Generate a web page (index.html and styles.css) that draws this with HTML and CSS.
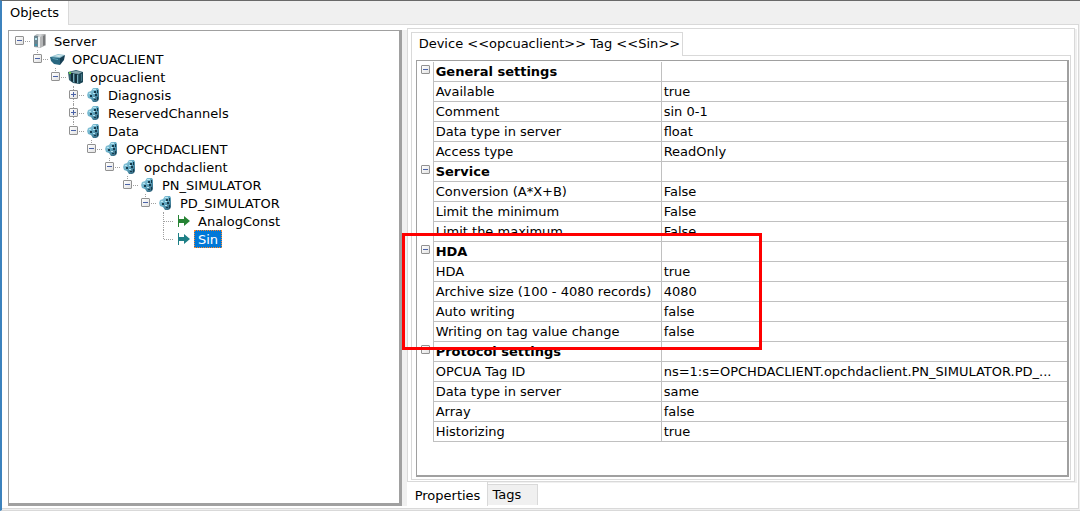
FILE: index.html
```html
<!DOCTYPE html>
<html lang="en">
<head>
<meta charset="utf-8">
<title>Objects</title>
<link rel="stylesheet" href="styles.css">
</head>
<body>
<svg class="defs" aria-hidden="true">
  <defs>
    <linearGradient id="ball" x1="0" y1="0" x2="1" y2="1">
      <stop offset="0" stop-color="#a5d8e8"/><stop offset=".5" stop-color="#62a9c3"/><stop offset="1" stop-color="#24536b"/>
    </linearGradient>
    <linearGradient id="steel" x1="0" y1="0" x2="1" y2="0">
      <stop offset="0" stop-color="#8f999e"/><stop offset=".5" stop-color="#d9dcdd"/><stop offset="1" stop-color="#9a9a9a"/>
    </linearGradient>
    <symbol id="server" viewBox="0 0 16 16">
      <path d="M2 3 5 1h8l1 1v10l-6 3-6-1z" fill="url(#steel)"/>
      <path d="m8 4 5-2.5 1 .5v10l-6 3z" fill="#b5b6b7"/>
      <path d="m11 3 2-1v10l-2 1z" fill="#77797b"/>
      <path d="M2 3h4v11l-4-1z" fill="#6d858f"/>
      <path d="M3 5h2v2H3z" fill="#b9e4ee"/>
      <path d="M3 11h2v2H3z" fill="#3b94ad"/>
      <path d="M6 4h2v10H6z" fill="#edf1f2"/>
    </symbol>
    <symbol id="device" viewBox="0 0 16 16">
      <path d="m0 6 8-3 7 1-5 4-9-1z" fill="#8fc0cf"/>
      <path d="m4 5 4-1 5 .5L9 6z" fill="#d4e9ed"/>
      <path d="m0 6 10 1v7l-6-1-3-3z" fill="#286780"/>
      <path d="m10 7 5-3-1 5-4 5z" fill="#163f54"/>
      <path d="m2 7 6 1v1L3 8z" fill="#5ea5ba"/>
    </symbol>
    <symbol id="rack" viewBox="0 0 16 16">
      <path d="m0 3 8-2 7 2v10l-4 2-6-1-4-3z" fill="#34606f"/>
      <path d="m2 3 6-1 6 1-3 2-7-1z" fill="#8ba9b1"/>
      <path d="M3 4h2v9l-2-1zM7 5h2v9H7z" fill="#142f3b"/>
      <path d="M5 5h1v8H5zM9 6h1v8H9z" fill="#76abbb"/>
      <path d="m11 5 4-2v10l-4 2z" fill="#1d4655"/>
      <path d="M13 5h1v7h-1z" fill="#477888"/>
      <path d="M1 3h2v2H1z" fill="#66c744"/>
    </symbol>
    <symbol id="node" viewBox="0 0 16 16">
      <path d="M7 1h5l1 2v9l-1 2-2 1H7l-2-3-3-1-1-3 1-3 3-1z" fill="url(#ball)"/>
      <path d="M8 4h2v2H8zM4 8h2v2H4zM11 3h1v3h-1zM9 7h2v2H9zM8 12h2v1H8zM11 10h1v3h-1z" fill="#173b4c"/>
      <path d="M7 2h3v1H7zM3 6h2v1H3zM7 6h2v1H7zM7 10h2v1H7z" fill="#bce6f0"/>
    </symbol>
    <symbol id="arrow" viewBox="0 0 16 16">
      <path d="M2 2h1v12H2zM3 6h5V3l6 5-6 5v-3H3z" fill="currentColor"/>
    </symbol>
  </defs>
</svg>

<main class="window">
  <div class="tabs" role="tablist">
    <button class="tab-main" role="tab" aria-selected="true">Objects</button>
  </div>
  <div class="page">
    <nav class="tree" aria-label="Objects">
      <ul class="root">
        <li>
          <div class="node"><button class="toggle" aria-label="Collapse Server"></button><svg class="icon"><use href="#server"/></svg><span class="label">Server</span></div>
          <ul><li>
            <div class="node"><button class="toggle" aria-label="Collapse OPCUACLIENT"></button><svg class="icon"><use href="#device"/></svg><span class="label">OPCUACLIENT</span></div>
            <ul><li>
              <div class="node"><button class="toggle" aria-label="Collapse opcuaclient"></button><svg class="icon"><use href="#rack"/></svg><span class="label">opcuaclient</span></div>
              <ul>
                <li><div class="node"><button class="toggle plus" aria-label="Expand Diagnosis"></button><svg class="icon"><use href="#node"/></svg><span class="label">Diagnosis</span></div></li>
                <li><div class="node"><button class="toggle plus" aria-label="Expand ReservedChannels"></button><svg class="icon"><use href="#node"/></svg><span class="label">ReservedChannels</span></div></li>
                <li>
                  <div class="node"><button class="toggle" aria-label="Collapse Data"></button><svg class="icon"><use href="#node"/></svg><span class="label">Data</span></div>
                  <ul><li>
                    <div class="node"><button class="toggle" aria-label="Collapse OPCHDACLIENT"></button><svg class="icon"><use href="#node"/></svg><span class="label">OPCHDACLIENT</span></div>
                    <ul><li>
                      <div class="node"><button class="toggle" aria-label="Collapse opchdaclient"></button><svg class="icon"><use href="#node"/></svg><span class="label">opchdaclient</span></div>
                      <ul><li>
                        <div class="node"><button class="toggle" aria-label="Collapse PN_SIMULATOR"></button><svg class="icon"><use href="#node"/></svg><span class="label">PN_SIMULATOR</span></div>
                        <ul><li>
                          <div class="node"><button class="toggle" aria-label="Collapse PD_SIMULATOR"></button><svg class="icon"><use href="#node"/></svg><span class="label">PD_SIMULATOR</span></div>
                          <ul>
                            <li><div class="node leaf"><svg class="icon green"><use href="#arrow"/></svg><span class="label">AnalogConst</span></div></li>
                            <li><div class="node leaf"><svg class="icon teal"><use href="#arrow"/></svg><span class="label selected">Sin</span></div></li>
                          </ul>
                        </li></ul>
                      </li></ul>
                    </li></ul>
                  </li></ul>
                </li>
              </ul>
            </li></ul>
          </li></ul>
        </li>
      </ul>
    </nav>

    <section class="side">
      <div class="outer">
        <div class="tabs" role="tablist">
          <button class="tab-device" role="tab" aria-selected="true">Device &lt;&lt;opcuaclient&gt;&gt; Tag &lt;&lt;Sin&gt;&gt;</button>
        </div>
        <div class="inner">
          <div class="grid">
            <table>
              <colgroup><col class="c-toggle"><col class="c-name"><col></colgroup>
              <tbody>
                <tr><td><button class="toggle" aria-label="Collapse General settings"></button></td><th scope="rowgroup">General settings</th><td></td></tr>
                <tr><td></td><td>Available</td><td>true</td></tr>
                <tr><td></td><td>Comment</td><td>sin 0-1</td></tr>
                <tr><td></td><td>Data type in server</td><td>float</td></tr>
                <tr><td></td><td>Access type</td><td>ReadOnly</td></tr>
              </tbody>
              <tbody>
                <tr><td><button class="toggle" aria-label="Collapse Service"></button></td><th scope="rowgroup">Service</th><td></td></tr>
                <tr><td></td><td>Conversion (A*X+B)</td><td>False</td></tr>
                <tr><td></td><td>Limit the minimum</td><td>False</td></tr>
                <tr><td></td><td>Limit the maximum</td><td>False</td></tr>
              </tbody>
              <tbody>
                <tr><td><button class="toggle" aria-label="Collapse HDA"></button></td><th scope="rowgroup">HDA</th><td></td></tr>
                <tr><td></td><td>HDA</td><td>true</td></tr>
                <tr><td></td><td>Archive size (100 - 4080 records)</td><td>4080</td></tr>
                <tr><td></td><td>Auto writing</td><td>false</td></tr>
                <tr><td></td><td>Writing on tag value change</td><td>false</td></tr>
              </tbody>
              <tbody>
                <tr><td><button class="toggle" aria-label="Collapse Protocol settings"></button></td><th scope="rowgroup">Protocol settings</th><td></td></tr>
                <tr><td></td><td>OPCUA Tag ID</td><td>ns=1:s=OPCHDACLIENT.opchdaclient.PN_SIMULATOR.PD_...</td></tr>
                <tr><td></td><td>Data type in server</td><td>same</td></tr>
                <tr><td></td><td>Array</td><td>false</td></tr>
                <tr><td></td><td>Historizing</td><td>true</td></tr>
              </tbody>
            </table>
            <div class="highlight"></div>
          </div>
        </div>
      </div>
      <div class="tabs" role="tablist">
        <button class="tab-bottom active" role="tab" aria-selected="true">Properties</button>
        <button class="tab-bottom" role="tab" aria-selected="false">Tags</button>
      </div>
    </section>
  </div>
</main>
</body>
</html>
```
FILE: styles.css
```css
* { box-sizing: border-box; }

body {
  margin: 0;
  background: #f0f0f0;
  color: #000;
  font: 13px/18px Verdana, "DejaVu Sans", sans-serif;
}

button {
  margin: 0;
  padding: 0;
  border: 0;
  border-radius: 0;
  background: #fff;
  color: inherit;
  font: inherit;
}

ul { list-style: none; margin: 0; padding: 0; }

.defs { position: absolute; width: 0; height: 0; }

.window {
  display: flex;
  flex-direction: column;
  min-height: 100vh;
  padding: 0 1px 1px 0;
  border-top: 1px solid #696969;
  border-left: 2px solid #3c82bd;
  border-bottom: 1px solid #d9d9d9;
}

.tabs { display: flex; }

.tab-main {
  height: 24px;
  padding: 0 9px 0 8px;
  border-right: 1px solid #d9d9d9;
}

.window > .tabs::after,
.outer > .tabs::after {
  content: "";
  flex: 1;
  border-bottom: 1px solid #d9d9d9;
}

.window > .tabs::after { background: #f0f0f0; }

.page {
  flex: 1;
  display: grid;
  grid-template-columns: 37fr 63fr;
  padding: 3px 1px 2px 6px;
  gap: 5px;
  background: #fff;
  border-right: 1px solid #d9d9d9;
  border-bottom: 1px solid #d9d9d9;
}

.tree {
  margin-top: 2px;
  padding: 1px 0 0 6px;
  border: solid #a0a0a0;
  border-width: 1px 3px 3px 1px;
  box-shadow: 5px 0 #f0f0f0;
}

.tree li { position: relative; }
.tree li li { margin-left: 18px; }

.tree li li::before {
  content: "";
  position: absolute;
  left: 4px;
  top: 0;
  height: 100%;
  border-left: 1px dotted #a0a0a0;
}

.tree li li:last-child::before { height: 9px; }

.node {
  position: relative;
  display: flex;
  align-items: center;
  height: 18px;
}

.node .toggle { margin-bottom: 1px; }

.node::after {
  content: "";
  order: 1;
  width: 5px;
  margin: 0 2px 0 1px;
  border-top: 1px dotted #a0a0a0;
}

.leaf::after { width: 9px; margin: 0 3px 0 5px; }

.toggle {
  position: relative;
  display: block;
  flex: none;
  width: 9px;
  height: 9px;
  border: 1px solid #919191;
  border-radius: 1px;
  background:
    linear-gradient(#4b63a7, #4b63a7) center / 5px 1px no-repeat,
    linear-gradient(135deg, #fff, #e2e2e2);
}

.toggle.plus {
  background:
    linear-gradient(#4b63a7, #4b63a7) center / 5px 1px no-repeat,
    linear-gradient(#4b63a7, #4b63a7) center / 1px 5px no-repeat,
    linear-gradient(135deg, #fff, #e2e2e2);
}

.icon { order: 2; flex: none; width: 16px; height: 16px; }
.green { color: #268334; }
.teal { color: #1e7f86; }

.label {
  order: 3;
  margin-left: 2px;
  padding: 1px 3px 0;
  border: 1px solid transparent;
  white-space: nowrap;
  line-height: 15px;
}

.selected { background: #0078d7; border: 1px dotted #ff8728; color: #fff; }

.side {
  display: flex;
  flex-direction: column;
  min-width: 0;
}

.outer {
  flex: 1;
  display: flex;
  flex-direction: column;
  margin-right: 2px;
  padding: 3px;
  padding-bottom: 1px;
  border: 1px solid #d9d9d9;
  box-shadow: 2px 1px #f0f0f0;
}

.tab-device {
  height: 24px;
  padding: 0 2px 1px 7px;
  border: 1px solid #d9d9d9;
  border-bottom: 0;
  white-space: nowrap;
}

.inner {
  flex: 1;
  display: flex;
  padding: 4px 1px 2px 4px;
  border: 1px solid #d9d9d9;
  border-top: 0;
}

.grid {
  position: relative;
  flex: 1;
  min-width: 0;
  padding-top: 1px;
  border: solid #a0a0a0;
  border-width: 1px 2px 2px 1px;
}

table {
  width: 100%;
  table-layout: fixed;
  border-collapse: separate;
  border-spacing: 0;
}

.c-toggle { width: 17px; }
.c-name { width: 228px; }

td, th {
  height: 20px;
  padding: 0 0 0 2px;
  border-bottom: 1px solid #c0c0c0;
  text-align: left;
  line-height: 19px;
  white-space: nowrap;
  overflow: hidden;
  text-overflow: ellipsis;
}

td:first-child {
  padding: 3px 0 0 4px;
  border-right: 1px solid #c0c0c0;
  border-bottom: 0;
  vertical-align: top;
}

td:nth-child(2), th { border-right: 1px solid #c0c0c0; }

.highlight {
  position: absolute;
  left: -15px;
  top: 172px;
  width: 360px;
  height: 117px;
  border: 3px solid #f00;
  pointer-events: none;
}

.tab-bottom {
  height: 21px;
  margin-top: 2px;
  padding: 0 16px 0 4px;
  border: 1px solid #d9d9d9;
  border-bottom: 0;
  border-left: 0;
  background: #f0f0f0;
}

.tab-bottom.active {
  height: 24px;
  margin-top: 0;
  padding: 4px 7px 0 8px;
  border-top: 0;
  background: #fff;
}
```
